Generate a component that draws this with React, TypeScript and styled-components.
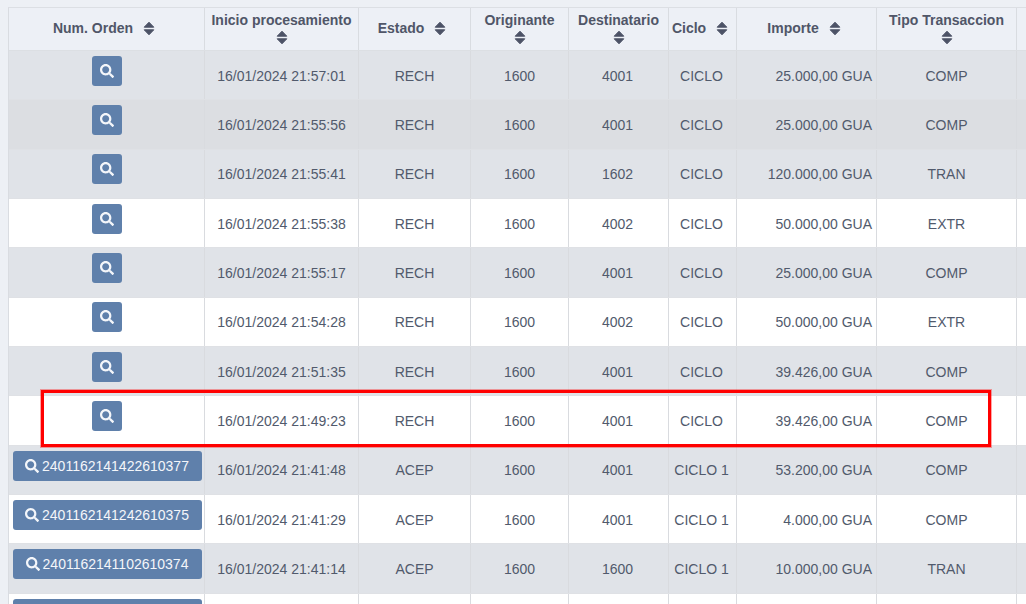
import React from "react";
import styled, { createGlobalStyle } from "styled-components";
import { FaSearch } from "react-icons/fa";

const Global = createGlobalStyle`
  html, body { margin: 0; padding: 0; height: 100%; overflow: hidden; background: #edf0f5; }
  body { font-family: "Liberation Sans", Arial, sans-serif; font-size: 14px; color: #515a6c; }
`;

const COLS = "196px 154px 112px 98px 100px 68px 140px 140px 1fr";

const Page = styled.div`
  position: relative;
  width: 1026px;
  height: 604px;
  overflow: hidden;
  padding: 7px 0 0 8px;
  box-sizing: border-box;
`;

const Table = styled.div`
  border-left: 1px solid #d9dce1;
  border-top: 1px solid #dcdfe4;
  width: 1030px;
`;

const HeadRow = styled.div`
  display: grid;
  grid-template-columns: ${COLS};
  height: 43px;
  box-sizing: border-box;
  background: #edf0f6;
  border-bottom: 1px solid #dcdfe3;
`;

const HeadCell = styled.div`
  box-sizing: border-box;
  border-right: 1px solid #d9dce1;
  display: flex;
  flex-wrap: wrap;
  align-items: center;
  justify-content: center;
  align-content: center;
  text-align: center;
  font-weight: 700;
  color: #505668;
  padding: 0 2px 2px 2px;
  line-height: 18px;
  column-gap: 10px;
`;

const BreakRow = styled.span`
  flex-basis: 100%;
  height: 16px;
  margin-top: 1px;
  display: flex;
  justify-content: center;
  align-items: center;
`;

const InlineSort = styled.span`
  display: flex;
  margin-right: 5px;
`;

const Row = styled.div<{ $tone: "grey" | "dark" | "white" }>`
  display: grid;
  grid-template-columns: ${COLS};
  height: 49.35px;
  box-sizing: border-box;
  background: ${(p) => (p.$tone === "white" ? "#ffffff" : p.$tone === "dark" ? "#dcdee2" : "#e0e3e8")};
  border-bottom: 1px solid #dfe1e5;
`;

const Cell = styled.div<{ $right?: boolean; $nudge?: boolean }>`
  box-sizing: border-box;
  border-right: 1px solid #d9dbdf;
  display: flex;
  align-items: center;
  justify-content: ${(p) => (p.$right ? "flex-end" : "center")};
  padding: 1px ${(p) => (p.$nudge ? "6px" : "4px")} 0 4px;
  white-space: nowrap;
  color: #515a6c;
`;

const ActionCell = styled.div`
  box-sizing: border-box;
  border-right: 1px solid #d9dbdf;
  display: flex;
  justify-content: center;
  align-items: flex-start;
  padding: 4.76px 1px 0 2px;
`;

const SearchButton = styled.button<{ $wide: boolean }>`
  height: 30px;
  box-sizing: border-box;
  min-width: ${(p) => (p.$wide ? "189px" : "30px")};
  background: #5f80ab;
  color: #f4f6fa;
  border: 0;
  border-radius: 3px;
  padding: 0 ${(p) => (p.$wide ? "12.5px" : "0")};
  display: flex;
  align-items: center;
  justify-content: center;
  gap: 3px;
  font: 14px "Liberation Sans", Arial, sans-serif;
  svg { width: 14px; height: 14px; flex: none; }
`;

const Highlight = styled.div`
  position: absolute;
  left: 41px;
  top: 390px;
  width: 950px;
  height: 57px;
  box-sizing: border-box;
  border: 3px solid #ff0000;
  outline: 1px solid rgba(255, 0, 0, 0.35);
  pointer-events: none;
`;

const SortIcon = () => (
  <svg width="12" height="15" viewBox="0 0 12 15" aria-hidden="true">
    <path d="M6 1.2 L10.8 6.2 H1.2 Z M1.2 8.8 H10.8 L6 13.8 Z" fill="#4c5266" stroke="#4c5266" strokeWidth="1" strokeLinejoin="round" />
  </svg>
);

type Col = { label: string; wrap?: boolean };
const columns: Col[] = [
  { label: "Num. Orden" },
  { label: "Inicio procesamiento", wrap: true },
  { label: "Estado" },
  { label: "Originante", wrap: true },
  { label: "Destinatario", wrap: true },
  { label: "Ciclo" },
  { label: "Importe" },
  { label: "Tipo Transaccion", wrap: true },
];

type Item = {
  tone: "grey" | "dark" | "white";
  num?: string;
  date?: string;
  orig?: string;
  time?: string;
  st?: string;
  dest?: string;
  cyc?: string;
  amt?: string;
  type?: string;
};

const DAY = "16/01/2024 ";
const rows: Item[] = [
  { tone: "grey", date: DAY, orig: "1600", time: "21:57:01", st: "RECH", dest: "4001", cyc: "CICLO", amt: "25.000,00 GUA", type: "COMP" },
  { tone: "dark", date: DAY, orig: "1600", time: "21:55:56", st: "RECH", dest: "4001", cyc: "CICLO", amt: "25.000,00 GUA", type: "COMP" },
  { tone: "grey", date: DAY, orig: "1600", time: "21:55:41", st: "RECH", dest: "1602", cyc: "CICLO", amt: "120.000,00 GUA", type: "TRAN" },
  { tone: "white", date: DAY, orig: "1600", time: "21:55:38", st: "RECH", dest: "4002", cyc: "CICLO", amt: "50.000,00 GUA", type: "EXTR" },
  { tone: "grey", date: DAY, orig: "1600", time: "21:55:17", st: "RECH", dest: "4001", cyc: "CICLO", amt: "25.000,00 GUA", type: "COMP" },
  { tone: "white", date: DAY, orig: "1600", time: "21:54:28", st: "RECH", dest: "4002", cyc: "CICLO", amt: "50.000,00 GUA", type: "EXTR" },
  { tone: "grey", date: DAY, orig: "1600", time: "21:51:35", st: "RECH", dest: "4001", cyc: "CICLO", amt: "39.426,00 GUA", type: "COMP" },
  { tone: "white", date: DAY, orig: "1600", time: "21:49:23", st: "RECH", dest: "4001", cyc: "CICLO", amt: "39.426,00 GUA", type: "COMP" },
  { tone: "grey", date: DAY, orig: "1600", num: "2401162141422610377", time: "21:41:48", st: "ACEP", dest: "4001", cyc: "CICLO 1", amt: "53.200,00 GUA", type: "COMP" },
  { tone: "white", date: DAY, orig: "1600", num: "2401162141242610375", time: "21:41:29", st: "ACEP", dest: "4001", cyc: "CICLO 1", amt: "4.000,00 GUA", type: "COMP" },
  { tone: "grey", date: DAY, orig: "1600", num: "2401162141102610374", time: "21:41:14", st: "ACEP", dest: "1600", cyc: "CICLO 1", amt: "10.000,00 GUA", type: "TRAN" },
  { tone: "white", num: "" },
];

export default function App() {
  return (
    <Page>
      <Global />
      <Table>
        <HeadRow>
          {columns.map((c) => (
            <HeadCell key={c.label}>
              {c.label}
              {c.wrap ? (
                <BreakRow>
                  <SortIcon />
                </BreakRow>
              ) : (
                <InlineSort>
                  <SortIcon />
                </InlineSort>
              )}
            </HeadCell>
          ))}
          <HeadCell />
        </HeadRow>
        {rows.map((r, i) => (
          <Row key={i} $tone={r.tone}>
            <ActionCell>
              <SearchButton $wide={r.num !== undefined}>
                {r.num !== "" && <FaSearch />}
                {r.num}
              </SearchButton>
            </ActionCell>
            <Cell>
              {r.date}
              {r.time}
            </Cell>
            <Cell>{r.st}</Cell>
            <Cell>{r.orig}</Cell>
            <Cell $nudge>{r.dest}</Cell>
            <Cell $nudge>{r.cyc}</Cell>
            <Cell $right>{r.amt}</Cell>
            <Cell>{r.type}</Cell>
            <Cell />
          </Row>
        ))}
      </Table>
      <Highlight />
    </Page>
  );
}
